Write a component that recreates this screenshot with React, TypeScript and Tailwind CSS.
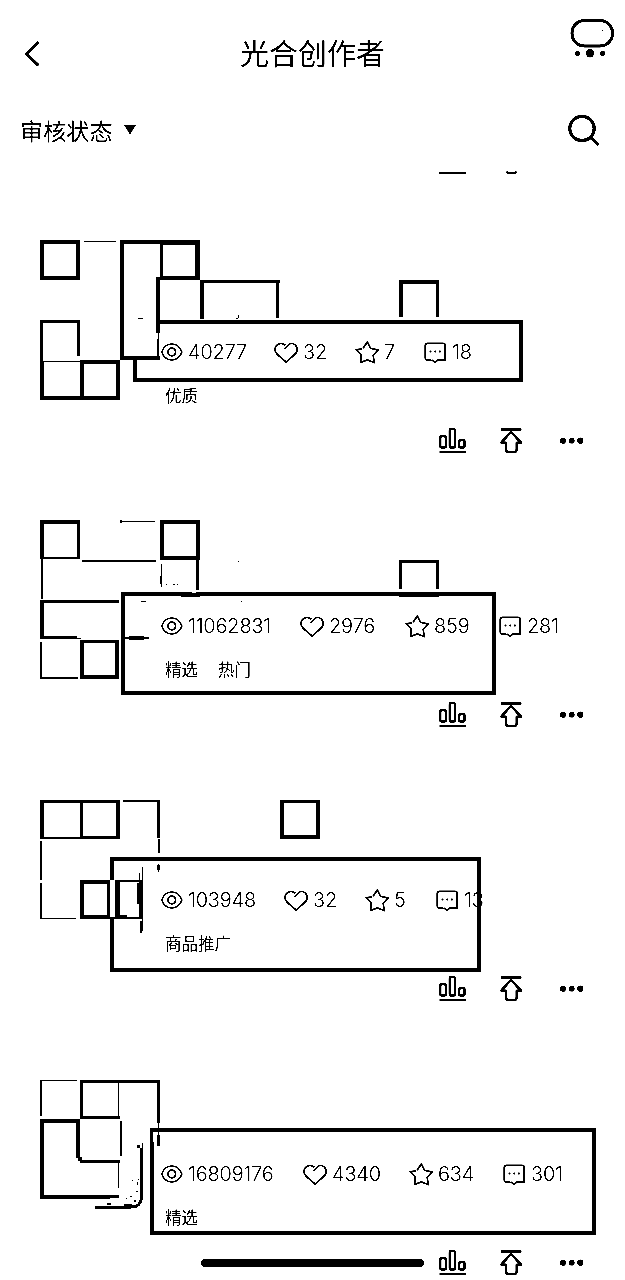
import React from "react";

type Box = [number, number, number, number];

interface Post {
  top: number;
  values: [string, string, string, string];
  columns: string;
  tags: string[];
  frame: string;
  masks: Box[];
  bars: Box[];
  paths?: { d: string; w: number }[];
}

const edges = (x: number, y: number, w: number, h: number, l: number, t: number, r: number, b: number): Box[] =>
  ([
    [x, y, l, h],
    [x, y, w, t],
    [x + w - r, y, r, h],
    [x, y + h - b, w, b],
  ] as Box[]).filter((e) => e[2] > 0 && e[3] > 0);

const posts: Post[] = [
  {
    top: 215,
    values: ["40277", "32", "7", "18"],
    columns: "grid-cols-[113px_81px_69px_100px]",
    tags: ["优质"],
    frame: "left-[133px] top-[105px] w-[390px] h-[62px]",
    masks: [[120, 318, 37, 42]],
    bars: [
      ...edges(40, 240, 40, 40, 4, 4, 4, 4),
      [84, 241, 32, 1],
      [120, 240, 4, 119],
      [120, 240, 80, 4],
      [120, 356, 40, 4],
      [156, 277, 4, 56],
      [158, 333, 1, 6],
      [157, 339, 2, 17],
      ...edges(160, 240, 40, 40, 3, 5, 5, 4),
      [200, 280, 80, 3],
      [200, 280, 4, 39],
      [276, 280, 3, 38],
      [138, 318, 5, 1],
      [238, 315, 1, 3],
      [236, 318, 2, 1],
      [40, 320, 3, 80],
      [40, 320, 40, 3],
      [77, 320, 3, 36],
      [43, 361, 37, 1],
      [40, 361, 4, 39],
      [40, 396, 40, 4],
      ...edges(80, 360, 40, 40, 4, 4, 4, 4),
      ...edges(399, 280, 40, 37, 4, 4, 3, 0),
    ],
  },
  {
    top: 489,
    values: ["11062831", "2976", "859", "281"],
    columns: "grid-cols-[139px_105px_94px_100px]",
    tags: ["精选", "热门"],
    frame: "left-[121px] top-[103px] w-[375px] h-[103px]",
    masks: [[192, 590, 4, 3]],
    bars: [
      ...edges(40, 520, 40, 39, 4, 4, 3, 2),
      [120, 521, 35, 1],
      [120, 520, 2, 3],
      ...edges(160, 520, 40, 40, 4, 4, 4, 4),
      [82, 560, 74, 2],
      [41, 559, 2, 40],
      [40, 600, 79, 3],
      [40, 600, 4, 39],
      [40, 636, 37, 3],
      [77, 638, 4, 1],
      [40, 642, 2, 37],
      [40, 677, 38, 2],
      ...edges(80, 640, 39, 39, 4, 3, 4, 4),
      [161, 564, 1, 23],
      [160, 576, 2, 8],
      [196, 560, 3, 30],
      [166, 584, 1, 1],
      [173, 584, 2, 1],
      [177, 584, 1, 1],
      [181, 596, 19, 1],
      [399, 596, 40, 1],
      [141, 601, 5, 1],
      [241, 601, 1, 1],
      [238, 561, 1, 1],
      [125, 637, 24, 2],
      [129, 636, 15, 4],
      ...edges(399, 560, 40, 29, 3, 3, 3, 0),
    ],
  },
  {
    top: 763,
    values: ["103948", "32", "5", "13"],
    columns: "grid-cols-[123px_81px_71px_100px]",
    tags: ["商品推广"],
    frame: "left-[110px] top-[94px] w-[371px] h-[115px]",
    masks: [[110, 880, 5, 37]],
    bars: [
      ...edges(40, 800, 40, 39, 4, 3, 0, 2),
      ...edges(80, 800, 40, 39, 3, 3, 4, 3),
      [123, 800, 37, 2],
      [157, 800, 3, 38],
      [158, 839, 2, 14],
      [157, 865, 3, 5],
      [158, 864, 1, 8],
      [40, 841, 2, 39],
      [40, 883, 2, 36],
      [40, 918, 36, 1],
      ...edges(80, 880, 30, 39, 4, 4, 3, 4),
      [115, 880, 5, 38],
      [115, 880, 27, 2],
      [110, 917, 32, 2],
      [119, 915, 8, 4],
      [139, 882, 3, 37],
      [142, 867, 1, 64],
      [139, 873, 1, 9],
      [137, 883, 2, 21],
      [140, 921, 2, 12],
      ...edges(280, 800, 40, 39, 4, 3, 4, 4),
    ],
  },
  {
    top: 1037,
    values: ["16809176", "4340", "634", "301"],
    columns: "grid-cols-[142px_106px_94px_100px]",
    tags: ["精选"],
    frame: "left-[150px] top-[91px] w-[446px] h-[107px]",
    masks: [[153, 1132, 1, 10]],
    bars: [
      [40, 1080, 2, 36],
      [40, 1080, 37, 1],
      [80, 1080, 3, 39],
      [80, 1080, 80, 3],
      [80, 1116, 40, 3],
      [118, 1082, 1, 36],
      [157, 1080, 3, 43],
      [158, 1123, 1, 12],
      [157, 1135, 3, 11],
      [40, 1119, 4, 79],
      [40, 1119, 40, 4],
      [76, 1119, 4, 39],
      [78, 1157, 4, 4],
      [80, 1160, 40, 3],
      [120, 1121, 2, 35],
      [118, 1163, 1, 25],
      [40, 1195, 79, 3],
      [40, 1195, 70, 4],
      [137, 1145, 3, 3],
      [142, 1143, 1, 10],
      [132, 1180, 1, 1],
      [138, 1179, 1, 1],
      [137, 1182, 1, 3],
      [130, 1196, 2, 1],
      [136, 1191, 2, 1],
      [134, 1200, 2, 2],
      [126, 1198, 1, 1],
      [107, 1203, 4, 2],
      [124, 1204, 8, 2],
    ],
    paths: [{ d: "M141.5 1148V1195C141.5 1203 139 1207 131 1207H95", w: 3 }],
  },
];

function Mosaic({ post }: { post: Post }) {
  return (
    <svg
      className="absolute left-0 top-0 h-[274px] w-[625px]"
      viewBox={`0 ${post.top} 625 274`}
      shapeRendering="crispEdges"
      aria-hidden="true"
    >
      {post.masks.map(([x, y, w, h], i) => (
        <rect key={"m" + i} x={x} y={y} width={w} height={h} fill="#fff" />
      ))}
      {post.bars.map(([x, y, w, h], i) => (
        <rect key={i} x={x} y={y} width={w} height={h} />
      ))}
      {post.paths?.map((p, i) => (
        <path key={i} d={p.d} fill="none" stroke="#000" strokeWidth={p.w} />
      ))}
    </svg>
  );
}

const line = { fill: "none", stroke: "#000", strokeWidth: 1.7 } as const;

function StatIcon({ kind }: { kind: number }) {
  return (
    <svg className="h-6 w-6 shrink-0" viewBox="0 0 24 24" aria-hidden="true">
      {kind === 0 && (
        <g {...line}>
          <path d="M.8 12C2.300 7 6.500 4 10.800 4S19.300 7 20.800 12C19.300 17 15.100 20 10.800 20S2.300 17 .8 12Z" />
          <circle cx="10.800" cy="12" r="3.800" />
        </g>
      )}
      {kind === 1 && (
        <path
          {...line}
          d="M11.500 5.300C9.600 3.500 7.500 3.200 5.500 3.700C2.500 4.500 1 7 1 9.800C1 11.500 1.700 12.800 3 14.200L12.200 22.100L21 14.200C22.400 12.800 23.200 11.500 23.200 9.800C23.200 6 20.600 3.500 17.500 3.500C14.700 3.500 13.200 5.500 10.500 9"
        />
      )}
      {kind === 2 && (
        <path
          {...line}
          d="M8 8.300L12.300 2L15.500 8.300L23 10L18.200 15.300L19.200 22.500L12.300 19.900L5.500 22.500L6.300 15.300L1.500 9.500L7.500 9"
        />
      )}
      {kind === 3 && (
        <g {...line}>
          <path d="M7.500 20H3.300Q1.300 20 1.300 18V5.300Q1.300 3.300 3.300 3.300H19.200Q21.200 3.300 21.200 5.300V20H14L11 22.200L8 20" />
          <path d="M5.500 11.500H7.500M10.200 11.500H12.200M14.900 11.500H16.900" strokeWidth="2" />
        </g>
      )}
    </svg>
  );
}

function Actions() {
  return (
    <div className="absolute left-[438px] top-[212px] flex h-7 items-start">
      <svg className="h-7 w-[62px]" viewBox="0 0 62 28" fill="none" stroke="#000" strokeWidth="2.300" aria-hidden="true">
        <rect x="2.300" y="9" width="5.500" height="11.500" rx="1.500" />
        <rect x="11.700" y="2" width="5.300" height="18.500" rx="1.500" />
        <rect x="21.200" y="13" width="5.300" height="7.500" rx="1.500" />
        <path d="M1.500 25H28" strokeWidth="2.200" />
      </svg>
      <svg className="h-7 w-[60px]" viewBox="0 0 60 28" fill="none" stroke="#000" strokeWidth="2.400" strokeLinejoin="round" aria-hidden="true">
        <path d="M1 2.500H21.500" strokeWidth="2.300" />
        <path d="M11 5L21 15.600H16.700V22.500Q16.700 25 14 25H8.500Q6 25 6 22.500V15.600H1.200Z" />
      </svg>
      <svg className="h-7 w-6" viewBox="0 0 24 28" aria-hidden="true">
        <circle cx="2.900" cy="13.700" r="3.100" />
        <circle cx="11.700" cy="13.700" r="2.900" />
        <circle cx="20.300" cy="13.700" r="3.100" />
      </svg>
    </div>
  );
}

function PostCard({ post }: { post: Post }) {
  const gaps = ["gap-[3px]", "gap-[5px]", "gap-[5px]", "gap-[4px]"];
  return (
    <article className="relative h-[274px] shrink-0">
      <div className={`absolute border-4 border-black ${post.frame}`} />
      <Mosaic post={post} />
      <div className={`relative grid h-6 translate-y-[125px] pl-[161px] ${post.columns}`}>
        {post.values.map((v, i) => (
          <div key={i} className={`flex items-center ${gaps[i]}`}>
            <StatIcon kind={i} />
            <span className="font-[Inter] text-[20px] font-[350] leading-6 tracking-[-0.2px]">{v}</span>
          </div>
        ))}
      </div>
      <div className="relative flex translate-y-[144px] gap-5 pl-[165px] text-[16.5px] leading-6">
        {post.tags.map((t) => (
          <span key={t}>{t}</span>
        ))}
      </div>
      <Actions />
    </article>
  );
}

export default function App() {
  return (
    <div className="relative flex h-[1280px] w-[625px] flex-col overflow-hidden bg-white font-['Noto_Sans_CJK_SC',sans-serif] text-black contrast-[6]">
      <header className="flex h-[106px] shrink-0 items-start justify-between pl-[22px] pr-2">
        <svg className="mt-10 h-7 w-[50px]" viewBox="0 0 50 28" fill="none" stroke="#000" strokeWidth="3" aria-hidden="true">
          <path d="M16.500 2L4.500 13.700L16.500 25.500" />
        </svg>
        <h1 className="mr-[14px] mt-8 text-[29px] font-normal leading-10">光合创作者</h1>
        <svg className="mt-4 h-11 w-[50px]" viewBox="0 0 50 44" aria-hidden="true">
          <rect x="5" y="4.500" width="40.500" height="25.500" rx="12.500" fill="none" stroke="#000" strokeWidth="3" />
          <circle cx="10.500" cy="37.300" r="2.600" />
          <circle cx="23" cy="37.300" r="4.200" />
          <circle cx="35.700" cy="37.300" r="2.600" />
          <rect x="35" y="14" width="1" height="1" />
        </svg>
      </header>
      <div className="flex h-[64px] shrink-0 items-start justify-between pl-5 pr-[23px]">
        <div className="flex items-center gap-[11px] pt-1">
          <span className="text-[23.200px] leading-10">审核状态</span>
          <svg className="h-[10px] w-3" viewBox="0 0 12 10" aria-hidden="true">
            <path d="M0 0H12L6 9.500Z" />
          </svg>
        </div>
        <svg className="mt-2 h-9 w-9" viewBox="0 0 36 36" fill="none" stroke="#000" strokeWidth="3.200" aria-hidden="true">
          <circle cx="16" cy="14.500" r="12.200" />
          <path d="M24.500 23L32.500 31" />
        </svg>
      </div>
      <div className="h-[45px] shrink-0">
        <svg className="ml-[438px] h-2 w-[90px]" viewBox="0 0 90 8" fill="none" stroke="#000" strokeWidth="2" aria-hidden="true">
          <path d="M1 3H28" />
          <path d="M68.500 1.500Q69.500 3 71 3H76Q78 3 78.500 1.500" />
        </svg>
      </div>
      <main className="flex shrink-0 flex-col">
        {posts.map((p) => (
          <PostCard key={p.top} post={p} />
        ))}
      </main>
      <div className="absolute left-[201px] top-[1259px] h-2 w-[223px] rounded-full bg-black" />
    </div>
  );
}
